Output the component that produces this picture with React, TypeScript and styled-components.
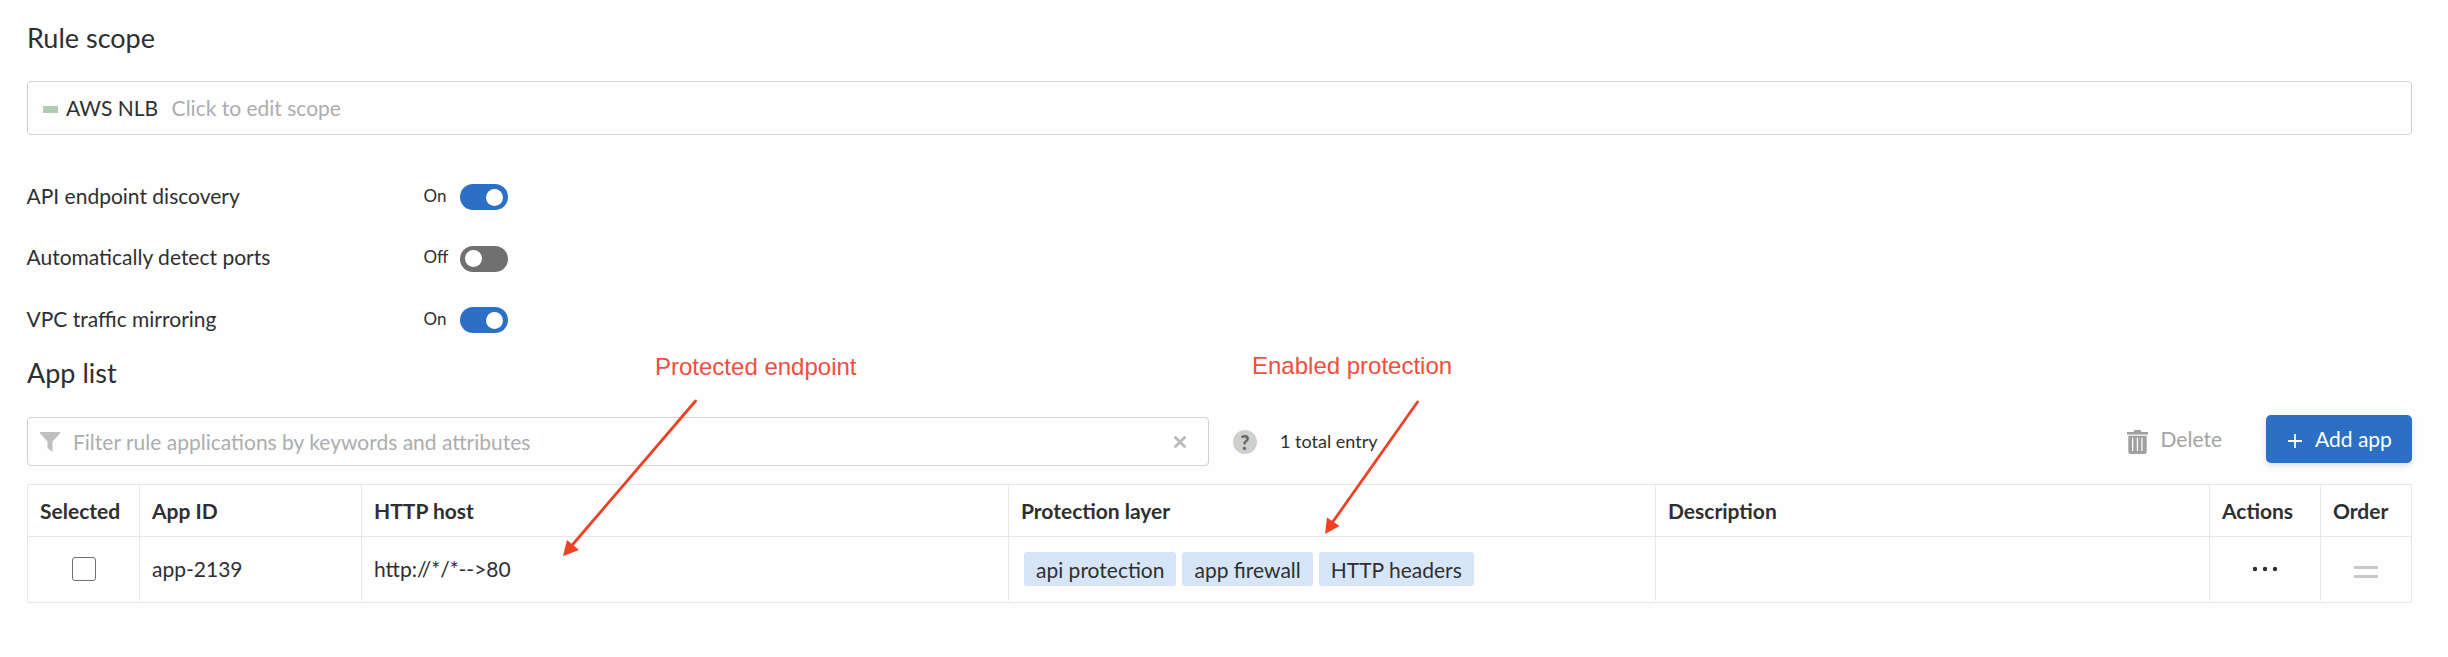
import React from "react";
import styled, { createGlobalStyle } from "styled-components";

const Global = createGlobalStyle`
  *, *::before, *::after { box-sizing: border-box; }
  body { margin: 0; background: #fefefe; color: #2f2f31; font-family: Lato, "Liberation Sans", sans-serif; font-size: 21px; line-height: 28px; }
`;

const Page = styled.main`
  position: relative;
  width: 2448px;
  height: 657px;
  padding: 18px 36px 0 27px;
  display: flex;
  flex-direction: column;
  overflow: hidden;
`;

const Heading = styled.h2<{ $top?: number }>`
  margin: ${(p) => p.$top ?? 0}px 0 0;
  height: 40px;
  font-size: 27px;
  line-height: 40px;
  font-weight: 400;
`;

const ScopeField = styled.div`
  height: 54px;
  margin-top: 23px;
  padding-left: 15px;
  display: flex;
  align-items: center;
  border: 1px solid #d0d0d1;
  border-radius: 4px;
`;

const ScopeMark = styled.span`
  width: 15px;
  height: 7px;
  margin: 3px 8px 0 0;
  background: #b1ccb2;
`;

const Placeholder = styled.span<{ $left: number }>`
  margin-left: ${(p) => p.$left}px;
  color: #adadae;
`;

const Settings = styled.div`
  margin-top: 31px;
  display: flex;
  flex-direction: column;
`;

const SettingRow = styled.div`
  height: 61.5px;
  display: flex;
  align-items: center;
`;

const SettingName = styled.span`
  width: 397px;
  margin-left: -0.5px;
  padding-bottom: 2px;
`;

const SettingState = styled.span`
  width: 36.5px;
  padding-bottom: 2px;
  font-size: 17px;
`;

const Toggle = styled.span<{ $on: boolean }>`
  width: 48px;
  height: 26px;
  margin-top: 1px;
  padding: 0 5px;
  display: flex;
  align-items: center;
  justify-content: ${(p) => (p.$on ? "flex-end" : "flex-start")};
  border-radius: 13px;
  background: ${(p) => (p.$on ? "#2c6fc7" : "#707070")};
  &::before { content: ""; width: 17px; height: 17px; border-radius: 50%; background: #fff; }
`;

const Toolbar = styled.div`
  height: 51px;
  margin-top: 22px;
  display: flex;
  align-items: flex-start;
`;

const FilterField = styled.div`
  width: 1182px;
  height: 49px;
  margin-top: 2px;
  padding: 0 22px 0 12px;
  display: flex;
  align-items: center;
  border: 1px solid #d0d0d1;
  border-radius: 4px;
`;

const ClearIcon = styled.svg`
  margin-left: auto;
`;

const Help = styled.span`
  width: 24px;
  height: 24px;
  margin: 15px 23px 0 24px;
  border-radius: 50%;
  background: #cfcfcf;
  color: #666;
  font-size: 20px;
  font-weight: 900;
  line-height: 24px;
  text-align: center;
`;

const Total = styled.span`
  margin-top: 12px;
  font-size: 18px;
`;

const DeleteButton = styled.button`
  height: 48px;
  margin-left: auto;
  padding: 0;
  display: flex;
  align-items: center;
  gap: 12px;
  border: 0;
  background: none;
  color: #a4a4a4;
  font: inherit;
`;

const TrashIcon = styled.svg`
  margin-top: 6px;
`;

const AddButton = styled.button`
  width: 146px;
  height: 48px;
  margin-left: 44px;
  padding: 0 0 0 22px;
  display: flex;
  align-items: center;
  gap: 13px;
  border: 0;
  border-radius: 5px;
  background: #2c6fc7;
  box-shadow: 0 3px 6px rgba(0, 0, 0, 0.12);
  color: #fff;
  font: inherit;
`;

const PlusIcon = styled.svg`
  margin-top: 4px;
`;

const Grid = styled.div`
  margin-top: 18px;
  border: 1px solid #e6e6e7;
`;

const GridRow = styled.div<{ $height: number }>`
  height: ${(p) => p.$height}px;
  display: grid;
  grid-template-columns: 111px 222px 647px 647px 554px 111px 91px;
  & + & { border-top: 1px solid #e6e6e7; padding-bottom: 1px; }
`;

const Cell = styled.div<{ $head?: boolean; $center?: boolean }>`
  padding: 0 ${(p) => (p.$center ? 0 : 12)}px;
  display: flex;
  align-items: center;
  justify-content: ${(p) => (p.$center ? "center" : "flex-start")};
  font-weight: ${(p) => (p.$head ? 700 : 400)};
  & + & { border-left: 1px solid #e6e6e7; }
`;

const Checkbox = styled.span`
  width: 24px;
  height: 24px;
  border: 1px solid #6f6f70;
  border-radius: 3px;
`;

const DragIcon = styled.svg`
  margin-top: 5px;
`;

const Tags = styled.div`
  margin-left: 3px;
  display: flex;
  gap: 6px;
`;

const Tag = styled.span`
  height: 34px;
  padding: 0 12px;
  border-radius: 3px;
  background: #d6e6f8;
  line-height: 35px;
`;

const Annotations = styled.svg`
  position: absolute;
  left: 0;
  top: 0;
  pointer-events: none;
`;

const Note = styled.text`
  font-family: "Liberation Sans", Arial, sans-serif;
  font-size: 24px;
  fill: #f04e3e;
`;

const settings = [
  { name: "API endpoint discovery", on: true },
  { name: "Automatically detect ports", on: false },
  { name: "VPC traffic mirroring", on: true },
];
const columns = ["Selected", "App ID", "HTTP host", "Protection layer", "Description", "Actions", "Order"];
const layers = ["api protection", "app firewall", "HTTP headers"];

export default function App() {
  return (
    <Page>
      <Global />
      <Heading>Rule scope</Heading>
      <ScopeField>
        <ScopeMark />
        <span>AWS NLB</span>
        <Placeholder $left={13.5}>Click to edit scope</Placeholder>
      </ScopeField>
      <Settings>
        {settings.map((s) => (
          <SettingRow key={s.name}>
            <SettingName>{s.name}</SettingName>
            <SettingState>{s.on ? "On" : "Off"}</SettingState>
            <Toggle $on={s.on} />
          </SettingRow>
        ))}
      </Settings>
      <Heading $top={2.5}>App list</Heading>
      <Toolbar>
        <FilterField>
          <svg width="20" height="20" viewBox="0 0 20 20" fill="#bfbfbf">
            <path d="M0 0H20V1.5L12.500 9.500V20L7.500 16V9.500L0 1.500Z" />
          </svg>
          <Placeholder $left={13}>Filter rule applications by keywords and attributes</Placeholder>
          <ClearIcon width="12" height="12" viewBox="0 0 12 12" stroke="#bdbdbd" strokeWidth="3" strokeLinecap="round">
            <path d="M1.5 1.5L10.5 10.5M10.5 1.5L1.5 10.5" />
          </ClearIcon>
        </FilterField>
        <Help>?</Help>
        <Total>1 total entry</Total>
        <DeleteButton>
          <TrashIcon width="22" height="24" viewBox="0 0 22 24" fill="#a0a0a0">
            <path d="M0 2H6.500L7.500 0H13.500L14.500 2H21V4.400H0Z" />
            <path fillRule="evenodd" d="M1.300 5.700H19.700V21.700Q19.700 24 17.400 24H3.600Q1.300 24 1.300 21.700ZM5 7.700V21H6.300V7.700ZM9.800 7.700V21H11.100V7.700ZM14.300 7.700V21H15.600V7.700Z" />
          </TrashIcon>
          Delete
        </DeleteButton>
        <AddButton>
          <PlusIcon width="14" height="14" viewBox="0 0 14 14" stroke="#fff" strokeWidth="1.8">
            <path d="M7 0V14M0 7H14" />
          </PlusIcon>
          Add app
        </AddButton>
      </Toolbar>
      <Grid>
        <GridRow $height={51}>
          {columns.map((c) => (
            <Cell key={c} $head>{c}</Cell>
          ))}
        </GridRow>
        <GridRow $height={66}>
          <Cell $center><Checkbox /></Cell>
          <Cell>app-2139</Cell>
          <Cell>http://*/*--&gt;80</Cell>
          <Cell>
            <Tags>
              {layers.map((l) => (
                <Tag key={l}>{l}</Tag>
              ))}
            </Tags>
          </Cell>
          <Cell />
          <Cell $center>
            <svg width="26" height="6" viewBox="0 0 26 6" fill="#2f2f31">
              <circle cx="3" cy="3" r="2.2" />
              <circle cx="13" cy="3" r="2.2" />
              <circle cx="23" cy="3" r="2.2" />
            </svg>
          </Cell>
          <Cell $center>
            <DragIcon width="24" height="12" viewBox="0 0 24 12" fill="#c9c9c9">
              <path d="M0 0H24V3H0ZM0 9H24V12H0Z" />
            </DragIcon>
          </Cell>
        </GridRow>
      </Grid>
      <Annotations width="2448" height="657">
        <Note x="655" y="375">Protected endpoint</Note>
        <Note x="1252" y="373.5">Enabled protection</Note>
        <g stroke="#ee4126" fill="#ee4126" strokeWidth="2.8">
          <path d="M695.500 401L571 546.500" strokeLinecap="round" />
          <path d="M1417.500 402L1332 523" strokeLinecap="round" />
          <path stroke="none" d="M563 556L567 540L579 550Z" />
          <path stroke="none" d="M1325 534L1327 517.500L1339.500 526Z" />
        </g>
      </Annotations>
    </Page>
  );
}
